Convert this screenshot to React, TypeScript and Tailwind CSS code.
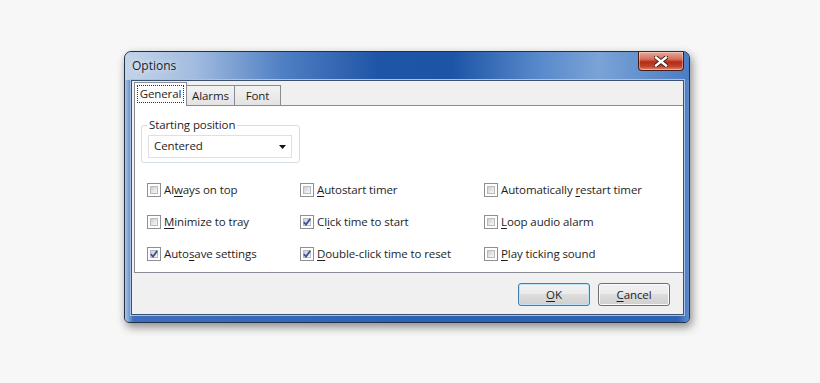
import React from "react";

type Item = { pre: string; key: string; post: string; checked: boolean };

const columns: { width: string; items: Item[] }[] = [
  {
    width: "w-[153px]",
    items: [
      { pre: "Al", key: "w", post: "ays on top", checked: false },
      { pre: "", key: "M", post: "inimize to tray", checked: false },
      { pre: "Auto", key: "s", post: "ave settings", checked: true },
    ],
  },
  {
    width: "w-[184px]",
    items: [
      { pre: "", key: "A", post: "utostart timer", checked: false },
      { pre: "Cl", key: "i", post: "ck time to start", checked: true },
      { pre: "", key: "D", post: "ouble-click time to reset", checked: true },
    ],
  },
  {
    width: "flex-1",
    items: [
      { pre: "Automatically ", key: "r", post: "estart timer", checked: false },
      { pre: "", key: "L", post: "oop audio alarm", checked: false },
      { pre: "", key: "P", post: "lay ticking sound", checked: false },
    ],
  },
];

const txt = "text-[11.5px] tracking-[-0.1px] text-[#1e1e1e]";

function CheckBox({ checked }: { checked: boolean }) {
  return (
    <span className="relative flex-none w-[14px] h-[14px] border border-[#8e8f8f] bg-white p-[2px]">
      <span className="block w-full h-full border border-[#b8bcc2] bg-[linear-gradient(135deg,#c9ccd1_0%,#e6e7e9_55%,#f7f7f7_100%)]" />
      {checked && (
        <svg className="absolute left-[2px] top-[2px]" width="8" height="8" viewBox="0 0 8 8">
          <path d="M0.8 4.2 L3 6.6 L7.2 0.9" fill="none" stroke="#3e5497" strokeWidth="1.8" />
        </svg>
      )}
    </span>
  );
}

function Option({ item }: { item: Item }) {
  return (
    <div className="flex items-center gap-[3px] h-[14px]">
      <CheckBox checked={item.checked} />
      <span className={txt + " leading-none whitespace-nowrap"}>
        {item.pre}
        <span className="underline underline-offset-2">{item.key}</span>
        {item.post}
      </span>
    </div>
  );
}

function Button({ label, rest, primary }: { label: string; rest: string; primary?: boolean }) {
  return (
    <button
      className={
        txt +
        " w-[72px] h-[23px] rounded-[3px] border leading-none flex items-center justify-center bg-[linear-gradient(#f2f2f2_0%,#ebebeb_45%,#dddddd_50%,#cfcfcf_100%)] " +
        (primary
          ? "border-[#3c7fb1] shadow-[inset_0_0_0_1px_#bfe3f7]"
          : "border-[#707070] shadow-[inset_0_0_0_1px_#fbfbfb]")
      }
    >
      <span className="underline underline-offset-2">{label}</span>
      {rest}
    </button>
  );
}

export default function App() {
  return (
    <div className="w-[820px] h-[383px] bg-[#f7f7f7] pt-[51px] pl-[124px] font-['Segoe_UI','Open_Sans',sans-serif]">
      <div className="w-[566px] h-[272px] flex flex-col rounded-t-[7px] rounded-b-[5px] border border-[#23324a] overflow-hidden bg-[linear-gradient(180deg,#5d8ccd_0%,#3468b8_40%,#2c61b3_100%)] shadow-[2px_4px_10px_rgba(0,0,0,0.45)]">
        {/* title bar */}
        <div className="h-[28px] flex-none flex items-start justify-between pl-[7px] pr-[5px] bg-[linear-gradient(90deg,#c3d4e9_0%,#a3bde0_12%,#4f7fc3_28%,#1f55a7_45%,#1d54a6_58%,#5a8bcb_74%,#7ba3d6_84%,#4a7dc4_100%)]">
          <span className="mt-[8px] text-[12px] text-[#1a2330] leading-none [text-shadow:0_0_6px_rgba(255,255,255,0.9)]">
            Options
          </span>
          <div className="w-[46px] h-[19px] rounded-b-[4px] border border-t-0 border-[#4a1c19] bg-[linear-gradient(180deg,#e9a898_0%,#d4705e_40%,#b52a17_55%,#c3432c_80%,#e08b70_100%)] flex items-center justify-center shadow-[inset_0_0_0_1px_rgba(255,255,255,0.35)]">
            <svg width="14" height="11" viewBox="0 0 14 11">
              <path d="M2 1.5 L12 9.5 M12 1.5 L2 9.5" stroke="#3a1a16" strokeWidth="4.2" strokeLinecap="square" />
              <path d="M2 1.5 L12 9.5 M12 1.5 L2 9.5" stroke="#ffffff" strokeWidth="2.4" strokeLinecap="square" />
            </svg>
          </div>
        </div>

        {/* client area */}
        <div className="flex-1 flex flex-col pl-[6px] pr-[5px] pb-[7px] bg-[linear-gradient(90deg,#b0c6e4_0%,#3d6fbd_1.5%,#2c62b4_50%,#2c62b4_98%,#5f8ccc_100%)]">
          <div className="flex-1 flex flex-col bg-[#f0f0f0] border border-[#3b516f] shadow-[0_0_0_1px_#a9c3e6]">
            {/* tabs */}
            <div className="flex items-end h-[24px] pl-[2px]">
              <div className="relative z-10 w-[53px] h-[24px] -mb-[1px] bg-white border border-b-0 border-[#898c95] flex items-start justify-center pt-[2px]">
                <span className={txt + " px-[2px] py-[1px] border border-dotted border-[#333] leading-[14px]"}>
                  General
                </span>
              </div>
              <div className={txt + " w-[48px] h-[20px] border border-l-0 border-b-0 border-[#898c95] bg-[linear-gradient(#f3f3f3,#e3e3e3)] leading-none flex items-center justify-center"}>
                Alarms
              </div>
              <div className={txt + " w-[46px] h-[20px] border border-l-0 border-b-0 border-[#898c95] bg-[linear-gradient(#f3f3f3,#e3e3e3)] leading-none flex items-center justify-center"}>
                Font
              </div>
            </div>

            {/* panel */}
            <div className="h-[168px] ml-[2px] bg-white border border-r-0 border-[#898c95] pt-[19px] pl-[6px]">
              <div className="relative w-[159px] h-[38px] border border-[#d5dfe5] rounded-[3px]">
                <span className={txt + " absolute left-[5px] -top-[9px] px-[2px] bg-white leading-[16px]"}>
                  Starting position
                </span>
                <div className="mt-[9px] ml-[6px] w-[144px] h-[23px] border border-[#e0e0e0] bg-white flex items-center justify-between pl-[5px] pr-[5px]">
                  <span className={txt + " leading-none -mt-[1px]"}>Centered</span>
                  <svg width="7" height="4" viewBox="0 0 7 4">
                    <path d="M0 0 H7 L3.5 4 Z" fill="#111" />
                  </svg>
                </div>
              </div>

              <div className="flex mt-[20px] pl-[6px]">
                {columns.map((col, i) => (
                  <div key={i} className={col.width + " flex flex-col gap-[18px]"}>
                    {col.items.map((item, j) => (
                      <Option key={j} item={item} />
                    ))}
                  </div>
                ))}
              </div>
            </div>

            {/* buttons */}
            <div className="flex-1 flex justify-end items-start gap-[8px] pt-[10px] pr-[13px]">
              <Button label="O" rest="K" primary />
              <Button label="C" rest="ancel" />
            </div>
          </div>
        </div>
      </div>
    </div>
  );
}
